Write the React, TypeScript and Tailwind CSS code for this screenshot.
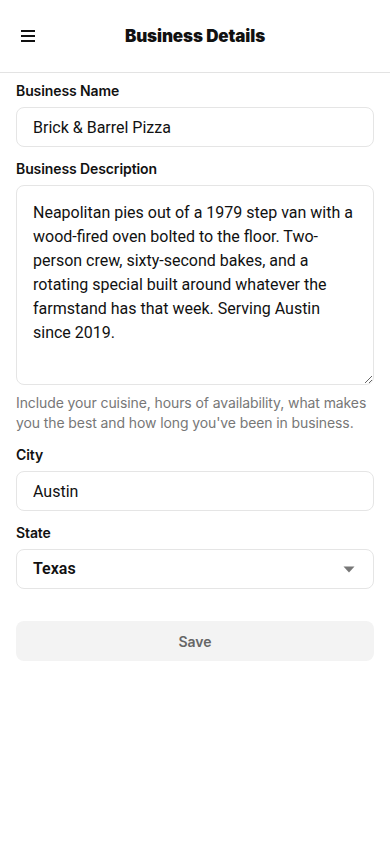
import React from "react";

const font = { fontFamily: "Inter, 'Noto Sans', sans-serif" };
const fieldFont = { fontFamily: "Roboto, 'Liberation Sans', sans-serif" };

const Label = ({ children }: { children: React.ReactNode }) => (
  <label className="block text-[14px] leading-5 font-semibold text-[#111] mb-1.5 tracking-[-0.1px]">
    {children}
  </label>
);

export default function App() {
  return (
    <div className="w-[390px] min-h-[844px] bg-white text-[#111]" style={font}>
      <header className="relative h-[73px] border-b border-[#e3e3e3] flex items-center justify-center">
        <button className="absolute left-[21px] top-[30px] flex flex-col gap-[3px]">
          <span className="block w-[14px] h-[2px] bg-[#111]" />
          <span className="block w-[14px] h-[2px] bg-[#111]" />
          <span className="block w-[14px] h-[2px] bg-[#111]" />
        </button>
        <h1 className="text-[17px] font-black tracking-[-0.1px] mt-[1px]">Business Details</h1>
      </header>

      <form className="px-4 pt-2 flex flex-col">
        <div>
          <Label>Business Name</Label>
          <input
            className="w-full h-10 rounded-lg border border-[#e5e5e5] px-4 text-[16px] text-[#111] outline-none"
            style={fieldFont}
            defaultValue="Brick & Barrel Pizza"
          />
        </div>

        <div className="mt-3">
          <Label>Business Description</Label>
          <textarea
            className="w-full h-[200px] rounded-lg border border-[#e5e5e5] px-4 py-[15px] text-[16px] leading-6 text-[#111] outline-none block"
            style={fieldFont}
            defaultValue="Neapolitan pies out of a 1979 step van with a wood-fired oven bolted to the floor. Two-person crew, sixty-second bakes, and a rotating special built around whatever the farmstand has that week. Serving Austin since 2019."
          />
          <p className="mt-2 text-[14px] leading-5 text-[#777] tracking-[-0.1px]">
            Include your cuisine, hours of availability, what makes you the best and how long you've been in business.
          </p>
        </div>

        <div className="mt-3">
          <Label>City</Label>
          <input
            className="w-full h-10 rounded-lg border border-[#e5e5e5] px-4 text-[16px] text-[#111] outline-none"
            style={fieldFont}
            defaultValue="Austin"
          />
        </div>

        <div className="mt-3">
          <Label>State</Label>
          <div className="w-full h-10 rounded-lg border border-[#e5e5e5] px-4 flex items-center justify-between">
            <span className="text-[16px] font-semibold" style={fieldFont}>Texas</span>
            <svg width="12" height="7" viewBox="0 0 12 7" className="mr-[2px]">
              <path d="M0.5 0.5 L11.5 0.5 L6 6.5 Z" fill="#777" />
            </svg>
          </div>
        </div>

        <button
          type="button"
          className="mt-8 w-full h-10 rounded-lg bg-[#f3f3f3] text-[14px] font-semibold text-[#666]"
        >
          Save
        </button>
      </form>
    </div>
  );
}
